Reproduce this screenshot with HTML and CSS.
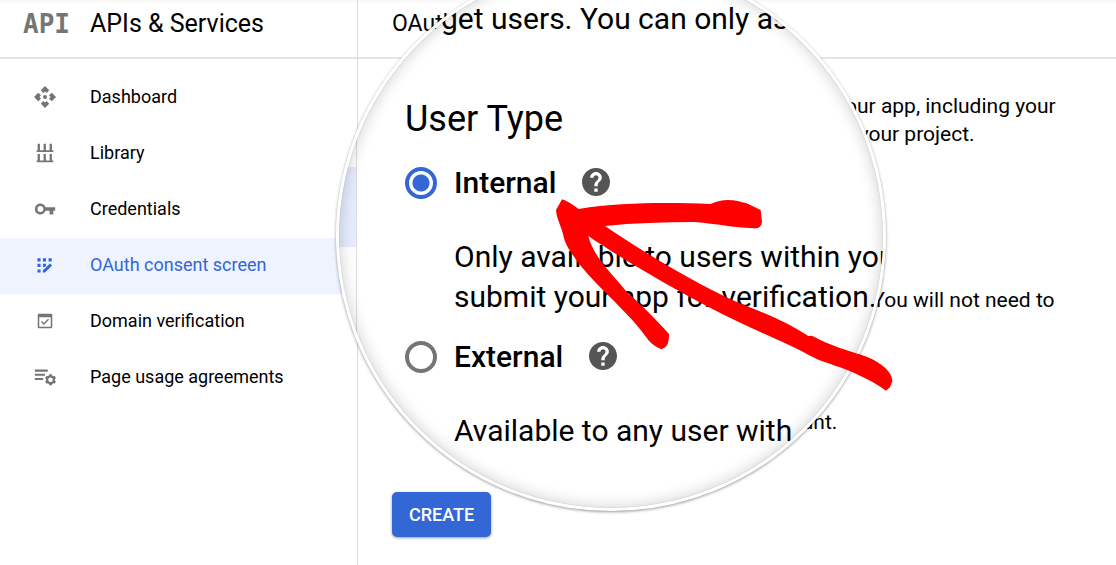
FILE: index.html
```html
<!DOCTYPE html>
<html lang="en">
<head>
<meta charset="utf-8">
<title>OAuth consent screen</title>
<link rel="stylesheet" href="styles.css">
</head>
<body>
<div class="app">
  <aside class="sidebar">
    <header class="bar bar-side">
      <span class="logo" aria-hidden="true">API</span>
      <span class="product">APIs &amp; Services</span>
    </header>
    <nav class="nav">
      <a class="item" href="#dashboard">
        <svg class="icon" viewBox="0 0 24 24"><circle cx="12" cy="12" r="2"/><path d="M12 1l4.200 4.200-2.400 2.800L12 6.500 10.200 8 7.800 5.200zM12 23l4.200-4.200-2.400-2.800-1.800 1.500-1.800-1.500-2.400 2.800zM1 12l4.200-4.200L8 10.200 6.500 12 8 13.800l-2.800 2.400zM23 12l-4.200-4.200-2.800 2.400 1.500 1.800-1.500 1.800 2.800 2.400z"/></svg>
        <span>Dashboard</span></a>
      <a class="item" href="#library">
        <svg class="icon" viewBox="-1 0 26 24"><path d="M4 2h2.500v7h4V2H13v7h4V2h2.500v7H21v2H3V9h1zM4 13h2.500v7h4v-7H13v7h4v-7h2.500v7H21v2H3v-2h1z"/></svg>
        <span>Library</span></a>
      <a class="item" href="#credentials">
        <svg class="icon" viewBox="-1 -1 26 26"><path d="M12.650 10A6 6 0 1 0 12.650 14H17v4h4v-4h2v-4zM7 15.200a3.200 3.200 0 1 1 0-6.400 3.200 3.200 0 0 1 0 6.400z"/></svg>
        <span>Credentials</span></a>
      <a class="item item-active" href="#consent" aria-current="page">
        <svg class="icon" viewBox="-1 -2 27 27"><path d="M4 4h3.500v3.500H4zM10.200 4h3.500v3.500h-3.500zM16.500 4H20v3.500h-3.500zM4 10.200h3.500v3.500H4zM10.200 10.200h3.500v2l-1.500 1.500h-2zM4 16.500h3.500V20H4zM10 17.700l8-8 2.500 2.300-8 8H10z"/></svg>
        <span>OAuth consent screen</span></a>
      <a class="item" href="#domain">
        <svg class="icon" viewBox="-2 -2 28 28"><path fill-rule="evenodd" d="M5 3.500h14A1.500 1.500 0 0 1 20.500 5v14a1.500 1.500 0 0 1-1.500 1.500H5A1.500 1.500 0 0 1 3.500 19V5A1.500 1.500 0 0 1 5 3.500zM5.300 7.500v11.200h13.400V7.500zM10.600 16.700L7.200 13.300l1.200-1.200 2.200 2.200 4.900-4.900 1.200 1.200z"/></svg>
        <span>Domain verification</span></a>
      <a class="item" href="#agreements">
        <svg class="icon" viewBox="-1 -1 26 26"><path d="M1 4h14v2.200H1zM1 8.500h11v2.200H1zM1 13h9v2.200H1z"/><circle cx="18" cy="15" r="3.700" fill="none" stroke="currentColor" stroke-width="2.400"/><path d="M18 9v2.500M18 18.500V21M12.800 12l2.200 1.200M21 16.800l2.200 1.200M12.800 18l2.200-1.200M21 13.200l2.200-1.200" stroke="currentColor" stroke-width="3"/></svg>
        <span>Page usage agreements</span></a>
    </nav>
  </aside>

  <main class="main">
    <header class="bar bar-main"><h1 class="title">OAuth consent screen</h1></header>
    <div class="content">
      <p class="intro">Choose how you want to configure and register your app, including your<br>target users. You can only associate one app with your project.</p>
      <p class="detail detail-internal">Only available to users within your organization. You will not need to</p>
      <p class="detail detail-external">Available to any user with a Google Account.</p>
      <button class="create" type="button">CREATE</button>
    </div>

    <section class="lens" aria-label="User type">
      <div class="lens-rail"></div>
      <div class="lens-body">
        <p class="lens-text">target users. You can only as</p>
        <h2 class="lens-title">User Type</h2>
        <div class="choice">
          <input class="radio" type="radio" name="type" id="internal" checked>
          <label class="choice-name" for="internal">Internal</label>
          <svg class="help" viewBox="2 2 20 20"><path d="M12 2C6.480 2 2 6.480 2 12s4.480 10 10 10 10-4.480 10-10S17.520 2 12 2zm1.200 17h-2.400v-2.400h2.400v2.400zm1.870-7.750l-.9.920C13.450 12.900 13.200 13.500 13.200 15h-2.400v-.5c0-1.100.45-2.100 1.170-2.830l1.240-1.260c.37-.36.59-.86.59-1.410 0-1-.8-1.800-1.800-1.800s-1.800.8-1.800 1.800H7.800c0-2.310 1.890-4.200 4.200-4.200s4.200 1.890 4.200 4.200c0 .88-.56 1.680-1.130 2.250z"/></svg>
        </div>
        <p class="lens-text choice-text">Only available to users within you<br>submit your app for verification.</p>
        <div class="choice">
          <input class="radio" type="radio" name="type" id="external">
          <label class="choice-name" for="external">External</label>
          <svg class="help" viewBox="2 2 20 20"><path d="M12 2C6.480 2 2 6.480 2 12s4.480 10 10 10 10-4.480 10-10S17.520 2 12 2zm1.200 17h-2.400v-2.400h2.400v2.400zm1.870-7.750l-.9.920C13.450 12.900 13.200 13.500 13.200 15h-2.400v-.5c0-1.100.45-2.100 1.170-2.830l1.240-1.260c.37-.36.59-.86.59-1.410 0-1-.8-1.800-1.800-1.800s-1.800.8-1.800 1.800H7.800c0-2.310 1.890-4.200 4.200-4.200s4.200 1.890 4.200 4.200c0 .88-.56 1.680-1.130 2.250z"/></svg>
        </div>
        <p class="lens-text choice-text">Available to any user with</p>
      </div>
    </section>

    <svg class="arrow" viewBox="0 0 1110 660" aria-hidden="true"><path d="M48 90L66 58Q85 64 116 87C250 65 400 68 512 72C550 52 590 60 620 70L662 90L666 125Q664 147 640 145C580 142 530 132 465 126C370 126 280 129 195 138C330 230 500 330 620 378C680 402 740 425 805 468L816 467C870 498 930 512 980 530C1030 550 1058 580 1057 604L1050 622L1038 632C1000 605 960 585 900 562C860 548 830 540 790 516C700 472 600 432 500 378C400 325 250 240 145 168C160 230 215 280 260 335C310 380 350 420 387 462Q388 490 376 502L364 508Q340 498 325 480C270 400 180 330 120 255C95 220 78 200 72 175C66 140 50 120 48 90Z"/></svg>
  </main>
</div>
</body>
</html>
```
FILE: styles.css
```css
* { box-sizing: border-box; }

body {
  margin: 0;
  background: #fff;
  color: #000;
  font: 18px/28px Roboto, "Liberation Sans", sans-serif;
  overflow: hidden;
}

h1, h2, p { margin: 0; font-weight: 400; }

.app {
  display: grid;
  grid-template-columns: 358px 1fr;
  min-height: 100vh;
}

.sidebar { border-right: 1px solid #dcdcdc; }

.bar {
  display: flex;
  align-items: center;
  height: 59px;
  padding-bottom: 10px;
  border-bottom: 2px solid #e5e5e5;
  background: linear-gradient(#f8f8f8, #fff 4px);
}

.bar-side { padding-left: 23px; }
.bar-main { padding-left: 34px; }

.logo {
  width: 67px;
  color: #757575;
  font: bold 26px/28px "DejaVu Sans Mono", monospace;
}

.product { font-size: 25px; }
.title { font-size: 23px; }

.nav { padding-top: 11px; }

.item {
  display: flex;
  align-items: center;
  gap: 33px;
  height: 56px;
  padding: 0 0 2px 33px;
  color: #000;
  text-decoration: none;
}

.item-active { background: #eef3fe; color: #3367d6; }

.icon {
  width: 24px;
  height: 24px;
  flex: none;
  color: #757575;
  fill: currentColor;
}

.item-active .icon { color: #3367d6; }

.main { position: relative; }

.content { padding: 33px 34px 28px; white-space: nowrap; }

.intro, .detail { font-size: 21px; }
.detail { padding-left: 32px; }
.detail-internal { margin-top: 138px; }
.detail-external { margin-top: 94px; }

.create {
  display: block;
  height: 45px;
  margin-top: 56px;
  padding: 0 17px;
  border: 0;
  border-radius: 5px;
  background: #3367d6;
  box-shadow: 0 1px 3px rgba(0, 0, 0, .4);
  color: #fff;
  font: 500 18px/44px Roboto, "Liberation Sans", sans-serif;
}

/* Magnifier floating over the page */
.lens {
  position: absolute;
  top: -39px;
  left: -22px;
  display: flex;
  width: 550px;
  height: 550px;
  overflow: hidden;
  border: 3px solid #fff;
  border-radius: 50%;
  background: #fff;
  box-shadow: 0 1px 3px rgba(0, 0, 0, .4);
  white-space: nowrap;
}

.lens::after {
  content: "";
  position: absolute;
  inset: 0;
  border-radius: 50%;
  box-shadow: inset 0 0 16px rgba(0, 0, 0, .2), inset 0 0 1px rgba(0, 0, 0, .4);
  pointer-events: none;
}

.lens-rail {
  width: 18px;
  flex: none;
  border-right: 1px solid #dcdcdc;
  background: linear-gradient(#fff 203px, #e4ecfd 203px, #e4ecfd 283px, #fff 283px);
}

.lens-body { padding: 35px 0 0 48px; }

.lens-text { font-size: 30px; line-height: 40px; }

.lens-title {
  margin-top: 56px;
  font-size: 36px;
  line-height: 48px;
}

.choice {
  display: flex;
  align-items: center;
  height: 40px;
  margin-top: 20px;
}

.radio {
  appearance: none;
  width: 32px;
  height: 32px;
  margin: 0 17px 0 0;
  border: 4px solid #757575;
  border-radius: 50%;
}

.radio:checked {
  border-color: #3367d6;
  background: radial-gradient(circle, #3367d6 8px, #fff 9px);
}

.choice-name { font-size: 30px; font-weight: 500; }

.help {
  width: 28px;
  height: 28px;
  margin: 0 0 3px 26px;
  fill: #555;
}

.choice-text {
  margin-top: 34px;
  padding-left: 49px;
}

/* Hand-drawn pointer */
.arrow {
  position: absolute;
  top: 180px;
  left: 182px;
  width: 370px;
  height: 220px;
  fill: #f00;
  pointer-events: none;
}
```
